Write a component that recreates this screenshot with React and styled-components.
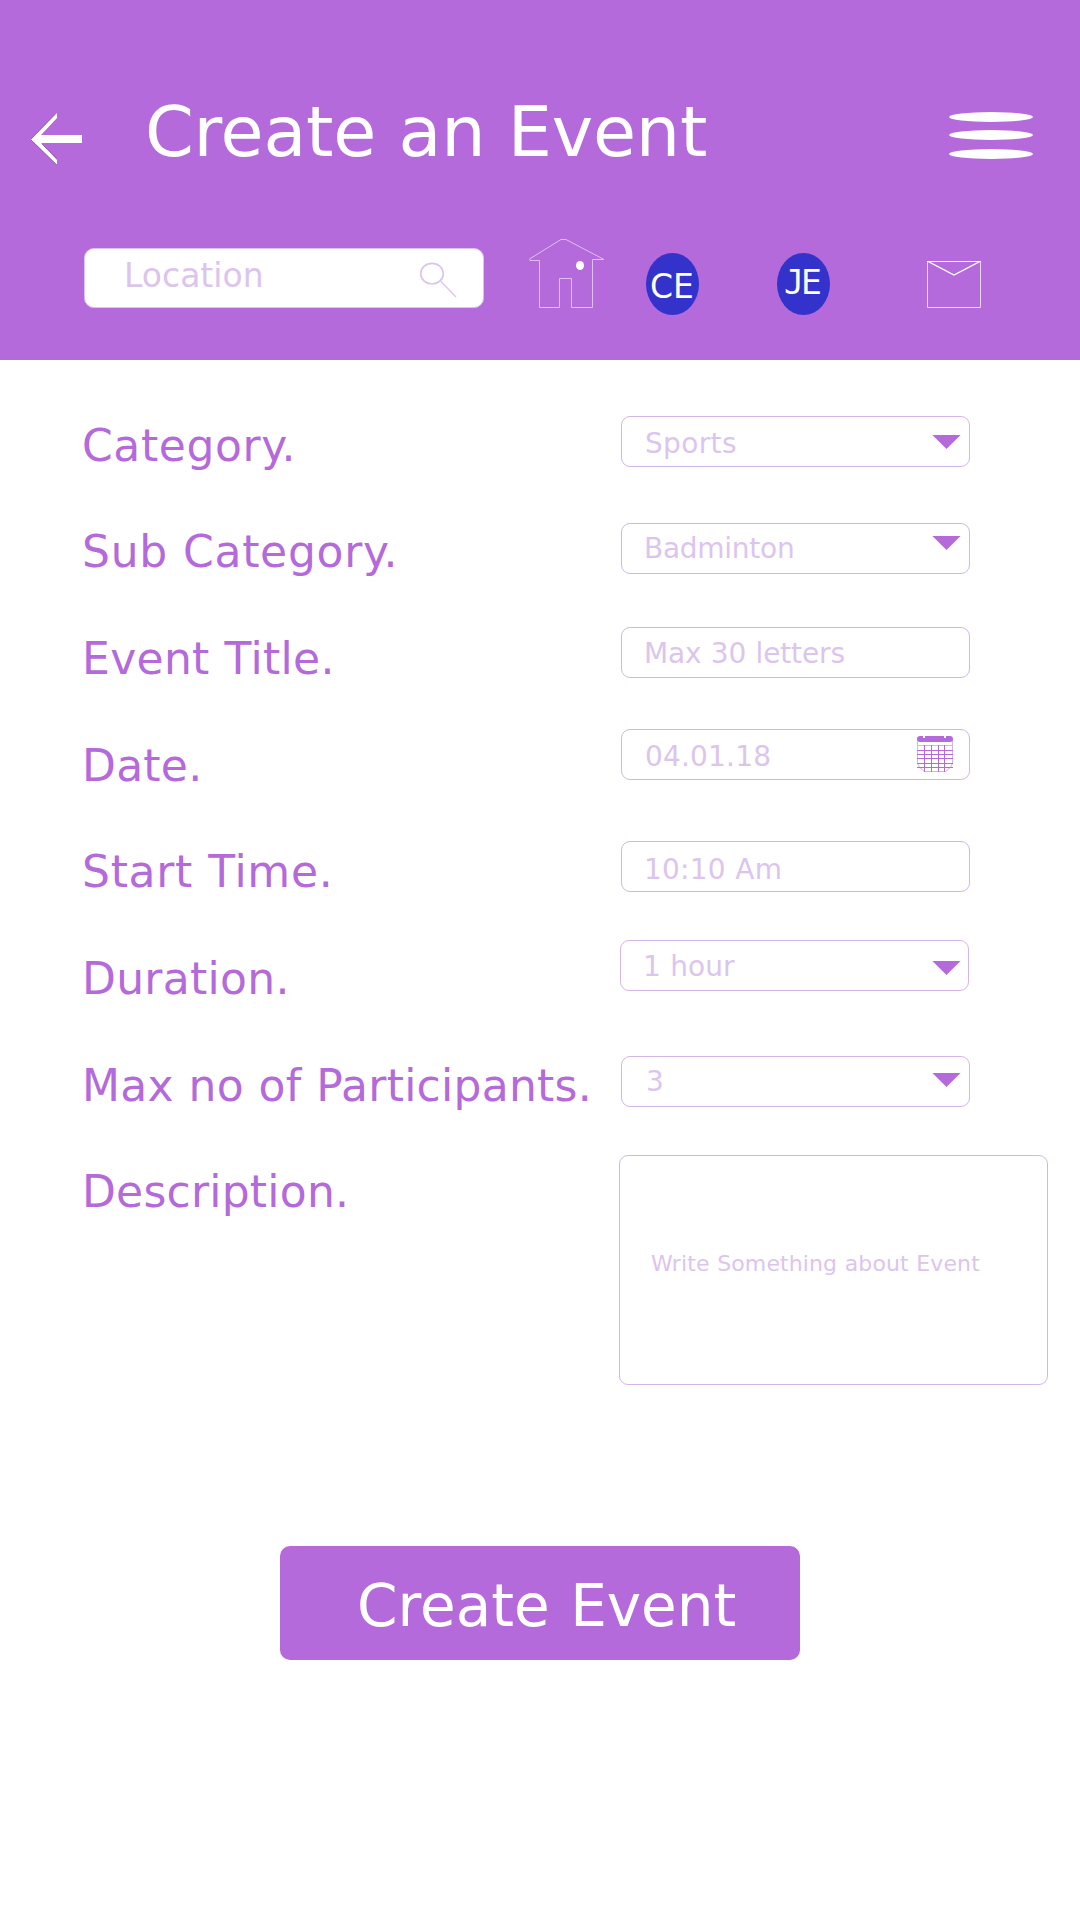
import React from "react";
import styled, { createGlobalStyle } from "styled-components";

const purple = "#b46ada";
const pale = "#dcc5ec";
const line = "#d4b5e8";

const GlobalStyle = createGlobalStyle`
  * { box-sizing: border-box; }
  body { margin: 0; background: #fff; }
`;

const Page = styled.main`
  width: 1080px;
  height: 1920px;
  overflow: hidden;
  background: #fff;
  font-family: Verdana, "DejaVu Sans", sans-serif;
  word-spacing: 0.034em;
`;

const Header = styled.header`
  height: 360px;
  padding: 91px 47px 0 31px;
  background: ${purple};
`;

const TitleBar = styled.div`
  display: flex;
  align-items: flex-start;
  height: 148px;
`;

const BackIcon = styled.svg`
  width: 52px;
  height: 54px;
  margin-top: 21px;
`;

const Title = styled.h1`
  flex: 1;
  margin: 0 0 0 62px;
  color: #fff;
  font-size: 70px;
  font-weight: 400;
  line-height: 82px;
  letter-spacing: -0.26px;
  white-space: nowrap;
`;

const Menu = styled.button`
  display: flex;
  flex-direction: column;
  width: 84px;
  margin-top: 21px;
  padding: 0;
  border: 0;
  background: none;
`;

const MenuBar = styled.span`
  width: 84px;
  height: 10px;
  margin-bottom: ${(p) => p.$gap || 0}px;
  border-radius: 50%;
  background: #fff;
`;

const Tools = styled.nav`
  display: flex;
  align-items: flex-start;
  padding-left: 53px;
`;

const Search = styled.div`
  display: flex;
  justify-content: space-between;
  width: 400px;
  height: 60px;
  margin-top: 9px;
  padding: 0 26px 0 39px;
  border: 1px solid ${pale};
  border-radius: 10px;
  background: #fff;
`;

const SearchText = styled.span`
  color: ${pale};
  font-size: 33px;
  line-height: 54px;
`;

const SearchIcon = styled.svg`
  width: 38px;
  height: 38px;
  margin-top: 12px;
`;

const HomeIcon = styled.svg`
  width: 77px;
  height: 70px;
  margin-left: 44px;
`;

const Badge = styled.span`
  display: flex;
  justify-content: flex-start;
  width: 53px;
  height: 62px;
  margin: 14px 0 0 ${(p) => p.$gap}px;
  padding: ${(p) => p.$top}px 0 0 ${(p) => p.$left}px;
  border-radius: 50%;
  background: #3333cc;
  color: #fff;
  font-size: 33px;
  line-height: 40px;
`;

const BarredLetter = styled.span`
  font-family: "DejaVu Sans Mono", monospace;
  letter-spacing: -3px;
`;

const MailIcon = styled.svg`
  width: 54px;
  height: 47px;
  margin: 22px 0 0 97px;
`;

const Form = styled.form`
  padding: 46px 0 0 82px;
`;

const Row = styled.div`
  display: flex;
  align-items: flex-start;
  height: ${(p) => p.$height}px;
`;

const Label = styled.label`
  width: ${(p) => p.$width || 539}px;
  padding-top: 10px;
  color: ${purple};
  font-size: 44px;
  line-height: 60px;
  letter-spacing: ${(p) => p.$tracking || 0}px;
  white-space: nowrap;
`;

const Field = styled.div`
  display: flex;
  justify-content: space-between;
  align-items: flex-start;
  width: 349px;
  height: 51px;
  margin-top: ${(p) => p.$top}px;
  padding: 0 8px 0 ${(p) => p.$left || 22}px;
  border: 1px solid ${line};
  border-radius: 9px;
`;

const Value = styled.span`
  padding-top: ${(p) => p.$top}px;
  color: ${pale};
  font-size: 28px;
  line-height: 40px;
  letter-spacing: ${(p) => p.$tracking || 0}px;
  white-space: nowrap;
`;

const Caret = styled.svg`
  width: 29px;
  height: 14px;
  margin: ${(p) => p.$top}px ${(p) => p.$right || 0}px 0 0;
  fill: ${purple};
`;

const CalendarIcon = styled.svg`
  width: 36px;
  height: 36px;
  margin: 6px 8px 0 0;
`;

const Description = styled.div`
  width: 429px;
  height: 230px;
  margin-top: 3px;
  padding: 92px 0 0 31px;
  border: 1px solid ${line};
  border-radius: 9px;
  color: ${pale};
  font-size: 22px;
  line-height: 32px;
  letter-spacing: 0.1px;
  white-space: nowrap;
`;

const Submit = styled.button`
  display: block;
  width: 520px;
  height: 114px;
  margin: 161px 0 0 198px;
  padding: 0 0 0 77px;
  border: 0;
  border-radius: 10px;
  background: ${purple};
  color: #fff;
  font-family: inherit;
  font-size: 58px;
  line-height: 120px;
  text-align: left;
  word-spacing: 0.034em;
  white-space: nowrap;
`;

const fields = [
  { label: "Category.", tracking: 0.6, value: "Sports", valueTracking: 0.35, height: 106, top: 10, text: 7, caret: 18, left: 23 },
  { label: "Sub Category.", tracking: 0.7, value: "Badminton", valueTracking: -0.27, height: 107, top: 11, text: 5, caret: 12 },
  { label: "Event Title.", tracking: 0.33, value: "Max 30 letters", valueTracking: -0.13, height: 107, top: 8, text: 6 },
  { label: "Date.", tracking: 0.25, value: "04.01.18", valueTracking: 0.18, height: 106, top: 3, text: 7, left: 23, calendar: true },
  { label: "Start Time.", tracking: 0.7, value: "10:10 Am", valueTracking: 0.2, height: 107, top: 9, text: 8 },
  { label: "Duration.", tracking: 0.3, value: "1 hour", height: 107, top: 1, text: 6, caret: 20, width: 538, right: -1 },
  { label: "Max no of Participants.", tracking: 0.25, value: "3", height: 106, top: 10, text: 5, caret: 16, left: 24 },
];

function Calendar() {
  return (
    <CalendarIcon viewBox="0 0 36 36" fill="none">
      <path d="M.5 4V27.500Q1 31 7.500 35.500H28.500Q35 31 35.500 27.500V4M0 9.500H36" stroke={line} />
      <path
        d="M0 14.500H36M0 18.500H36M0 22.500H36M0 27.500H36M0 31.500H36M7.500 9V36M14.500 9V36M21.500 9V36M27.500 9V36"
        stroke={purple}
      />
      <path d="M3 0H6V2H8V0H27V2H29V0H33A3 3 0 0 1 33 6H3A3 3 0 0 1 3 0Z" fill={purple} />
    </CalendarIcon>
  );
}

export default function App() {
  return (
    <Page>
      <GlobalStyle />
      <Header>
        <TitleBar>
          <BackIcon viewBox="0 0 52 54">
            <path d="M0 27.500 26 .5V6L10 23H51V31H10L26 48V53Z" fill="#fff" />
            <path d="M0 27 26 .5M0 28 26 53M11 32 26 46.500" stroke="#7d5c8c" strokeWidth=".7" fill="none" />
          </BackIcon>
          <Title>Create an Event</Title>
          <Menu aria-label="Menu">
            <MenuBar $gap={8} />
            <MenuBar $gap={9} />
            <MenuBar />
          </Menu>
        </TitleBar>
        <Tools>
          <Search>
            <SearchText>Location</SearchText>
            <SearchIcon viewBox="419 261 38 38" fill="none" stroke={pale}>
              <ellipse cx="432" cy="273.700" rx="11.300" ry="10.300" strokeWidth="1.700" />
              <path d="M440.500 281 456 297" strokeWidth="1.300" />
            </SearchIcon>
          </Search>
          <HomeIcon viewBox="528 239 77 70" fill="none">
            <path
              d="M529.500 259 561 239.500H566L604 259.500H592.500V307.500H571.500V278.500H559.500V307.500H539.500V260.500H530Z"
              stroke="#dfbff1"
            />
            <ellipse cx="580" cy="265.500" rx="4" ry="4.600" fill="#fff" />
          </HomeIcon>
          <Badge $gap={41} $top={14} $left={4}>CE</Badge>
          <Badge $gap={78} $top={10} $left={7}>
            <BarredLetter>J</BarredLetter>E
          </Badge>
          <MailIcon viewBox="0 0 54 47" fill="none">
            <path d="M.5 .5V46.500H53.500V.5" stroke="#ecd6f7" />
            <path d="M0 .5H54" stroke="#fff" />
            <path d="M1 .5 27 14 53 .5" stroke="#fff" strokeWidth="1.400" />
          </MailIcon>
        </Tools>
      </Header>
      <Form>
        {fields.map((f) => (
          <Row key={f.label} $height={f.height}>
            <Label $width={f.width} $tracking={f.tracking}>{f.label}</Label>
            <Field $top={f.top} $left={f.left}>
              <Value $top={f.text} $tracking={f.valueTracking}>{f.value}</Value>
              {f.caret && (
                <Caret viewBox="0 0 29 14" $top={f.caret} $right={f.right}>
                  <path d="M.4 0H28.600L14.500 14Z" />
                </Caret>
              )}
              {f.calendar && <Calendar />}
            </Field>
          </Row>
        ))}
        <Row $height={233}>
          <Label $width={537} $tracking={0.22}>Description.</Label>
          <Description>Write Something about Event</Description>
        </Row>
        <Submit type="button">Create Event</Submit>
      </Form>
    </Page>
  );
}
